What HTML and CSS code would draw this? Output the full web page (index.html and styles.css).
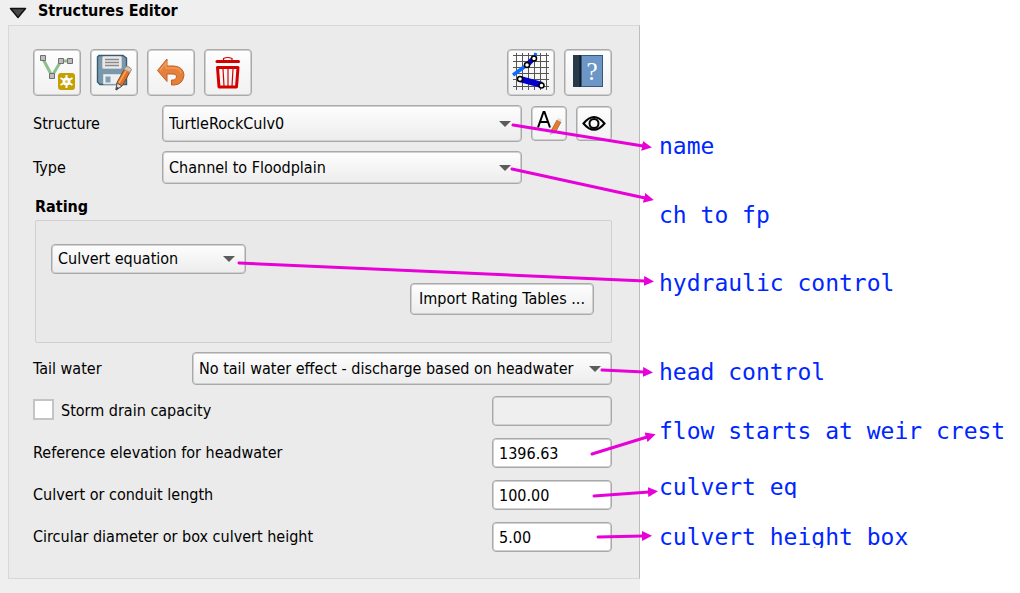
FILE: index.html
```html
<!DOCTYPE html>
<html lang="en">
<head>
<meta charset="utf-8">
<title>Structures Editor</title>
<link rel="stylesheet" href="styles.css">
</head>
<body>
<div class="page">
  <main class="panel">
    <header class="panel-header">
      <svg class="collapse" viewBox="0 0 18 12" aria-hidden="true"><path d="M1.500 1.500H16.500L9 10.500Z" fill="#484848" stroke="#111" stroke-width="1.500" stroke-linejoin="round"/></svg>
      <h1 class="title">Structures Editor</h1>
    </header>
    <form class="group">
      <div class="toolbar">
        <button type="button" class="tool" aria-label="Add structure">
          <svg viewBox="0 0 48 48">
            <path d="M10 10L19 27L28 12H37" fill="none" stroke="#8cc08c" stroke-width="3"/>
            <g fill="#bdbdbd" stroke="#6f6f6f"><path d="M7.500 6.500h5v5h-5zM16.500 24.500h5v5h-5zM25.500 9.500h5v5h-5zM34.500 9.500h5v5h-5z"/></g>
            <rect x="25" y="24" width="17" height="17" rx="3" fill="#c4a000"/>
            <path d="M33.500 26V39M27.500 29l12 7M27.500 36l12-7" stroke="#fff" stroke-width="2"/>
            <circle cx="33.500" cy="32.500" r="4" fill="#fff"/><circle cx="33.500" cy="32.500" r="1.500" fill="#e5c24a"/>
          </svg>
        </button>
        <button type="button" class="tool" aria-label="Save edits">
          <svg viewBox="0 0 48 48">
            <path d="M9 6.500H33L36.500 9V35.500H10L7.500 33V8Z" fill="#7898ac" stroke="#385b70" stroke-width="1.400"/>
            <rect x="12.500" y="7.500" width="19" height="12" rx="1" fill="#e9e9e9" stroke="#ccc"/>
            <path d="M15 10.500H29M15 13.500H29M15 16.500H29" stroke="#8b8b8b" stroke-width="1.500"/>
            <path d="M13.500 25.500H30.500V35H13.500Z" fill="#eee" stroke="#d5dde2"/>
            <rect x="15.500" y="27.500" width="5" height="6" fill="#7da0b8"/>
            <path d="M27 33.500L34.500 20L40 23L32.500 36.500L26 41Z" fill="#e56f22" stroke="#7b4a26"/>
            <path d="M29 34L36.500 21" stroke="#ffae58" stroke-width="1.500"/>
            <path d="M34 20.500L36 17.500Q40 17 41.500 20.500L40 23.500Z" fill="#d9c5b5" stroke="#a08d80"/>
            <path d="M27 34L32 37L26 41Z" fill="#ddd" stroke="#555"/><path d="M26 41l1-3 2 1z" fill="#333"/>
          </svg>
        </button>
        <button type="button" class="tool" aria-label="Undo">
          <svg viewBox="0 0 48 48">
            <path d="M10.500 21.500L20 10V17H27Q36.500 18 37 26Q36 35.500 27 36H24.500V31H27Q30 30 29.500 27Q29 25 26 25H20V32.500Z" fill="#e5803c" stroke="#c45f1c" stroke-linejoin="round"/>
            <path d="M13 21.500L19 14V19H27Q33 19 34 24" fill="none" stroke="#ef9a5c" stroke-width="1.500"/>
          </svg>
        </button>
        <button type="button" class="tool" aria-label="Delete">
          <svg viewBox="0 0 48 48" fill="none" stroke="#d40000">
            <path d="M13 12.500H34.500" stroke-width="3" stroke-linecap="round"/>
            <path d="M19.500 11V9.500Q23.500 7.500 28 9.500V11" stroke-width="1.200"/>
            <path d="M13.500 18.500H34L32.500 38H15Z" stroke-width="3" stroke-linejoin="round"/>
            <path d="M19 20L20 37M24 20V37M29 20L28 37" stroke-width="1.200"/>
          </svg>
        </button>
        <span class="spacer"></span>
        <button type="button" class="tool" aria-label="Schematize structures">
          <svg viewBox="0 0 48 48">
            <path d="M9.500 4V41M15.500 4V41M21.500 4V41M27.500 4V41M33.500 4V41M39.500 4V41M6 6.500H42M6 12.500H42M6 18.500H42M6 24.500H42M6 30.500H42M6 37.500H42" stroke="#555" stroke-width="1"/>
            <path d="M6 26L20 16" stroke="#0a6cff" stroke-width="3.500"/>
            <path d="M20 16L27 9" stroke="#0000c8" stroke-width="5"/><path d="M27 9L29 4" stroke="#0a6cff" stroke-width="3"/>
            <path d="M13 30L35 36" stroke="#0000c8" stroke-width="6"/>
            <g fill="#fff" stroke="#000" stroke-width="1.500"><circle cx="20" cy="16" r="2.500"/><circle cx="27" cy="9.500" r="2.500"/><circle cx="13" cy="30" r="2.500"/><circle cx="34.500" cy="36.500" r="2.500"/></g>
          </svg>
        </button>
        <button type="button" class="tool" aria-label="Help">
          <svg viewBox="0 0 48 48">
            <rect x="9" y="6" width="30" height="32" fill="#263a49"/>
            <path d="M16.500 6V38" stroke="#111d27" stroke-width="2"/>
            <rect x="17.500" y="6.500" width="21" height="31" fill="#6b96c5" stroke="#375877"/>
            <text x="28" y="31" text-anchor="middle" class="help-glyph">?</text>
          </svg>
        </button>
      </div>

      <div class="row row-structure">
        <label class="label label-short" for="structure">Structure</label>
        <span class="combo grow"><select id="structure"><option>TurtleRockCulv0</option></select><svg class="caret" viewBox="0 0 12 6"><path d="M0 0H12L6 6Z"/></svg></span>
        <button type="button" class="tool small" aria-label="Rename structure">
          <svg viewBox="0 0 36 36">
            <path d="M7 21.500L12.500 6H13.500L19 21.500M9 16H17" fill="none" stroke="#000" stroke-width="2"/>
            <path d="M20 25L26 14L30 16L24 27Z" fill="#e57a2c" stroke="#a8653a" stroke-width=".8"/>
            <path d="M26 14L27.500 12L31 14L30 16Z" fill="#ddd"/><path d="M20 24.500L24 27L19 29Z" fill="#bbb"/>
          </svg>
        </button>
        <button type="button" class="tool small" aria-label="Show structure">
          <svg viewBox="0 0 36 36" fill="none" stroke="#000" stroke-width="2"><path d="M7.500 17.500Q18 4.500 28.500 17.500Q18 30 7.500 17.500Z"/><circle cx="18" cy="17.500" r="4.500"/></svg>
        </button>
      </div>

      <div class="row row-type">
        <label class="label label-short" for="type">Type</label>
        <span class="combo combo-type"><select id="type"><option>Channel to Floodplain</option></select><svg class="caret" viewBox="0 0 12 6"><path d="M0 0H12L6 6Z"/></svg></span>
      </div>

      <h2 class="subtitle">Rating</h2>
      <section class="rating">
        <span class="combo combo-rating"><select aria-label="Rating method"><option>Culvert equation</option></select><svg class="caret" viewBox="0 0 12 6"><path d="M0 0H12L6 6Z"/></svg></span>
        <button type="button" class="import">Import Rating Tables ...</button>
      </section>

      <div class="row row-tail">
        <label class="label label-tail" for="tail">Tail water</label>
        <span class="combo grow"><select id="tail"><option>No tail water effect - discharge based on headwater</option></select><svg class="caret" viewBox="0 0 12 6"><path d="M0 0H12L6 6Z"/></svg></span>
      </div>

      <div class="fields">
        <div class="row">
          <input type="checkbox" class="check" id="storm">
          <label class="label grow" for="storm">Storm drain capacity</label>
          <input type="text" class="field" aria-label="Storm drain capacity value" disabled>
        </div>
        <div class="row">
          <label class="label grow" for="elevation">Reference elevation for headwater</label>
          <input type="text" class="field" id="elevation" value="1396.63">
        </div>
        <div class="row">
          <label class="label grow" for="length">Culvert or conduit length</label>
          <input type="text" class="field" id="length" value="100.00">
        </div>
        <div class="row">
          <label class="label grow" for="height">Circular diameter or box culvert height</label>
          <input type="text" class="field" id="height" value="5.00">
        </div>
      </div>
    </form>
  </main>

  <aside class="notes">
    <p class="note">name</p>
    <p class="note">ch to fp</p>
    <p class="note">hydraulic control</p>
    <p class="note">head control</p>
    <p class="note">flow starts at weir crest</p>
    <p class="note cut">culvert eq</p>
    <p class="note cut">culvert height box</p>
  </aside>

  <svg class="arrows" viewBox="0 0 1020 593" aria-hidden="true">
    <defs><marker id="head" markerUnits="userSpaceOnUse" markerWidth="10" markerHeight="10" refX="1" refY="5" orient="auto"><path d="M0 0L10 5L0 10Z" fill="#e800d8"/></marker></defs>
    <g stroke="#e800d8" stroke-width="3" stroke-linecap="round">
      <path d="M513 125L643 146" marker-end="url(#head)"/>
      <path d="M512 169L645 198" marker-end="url(#head)"/>
      <path d="M239 263L645 281" marker-end="url(#head)"/>
      <path d="M602 370L644 372" marker-end="url(#head)"/>
      <path d="M592 454L647 437" marker-end="url(#head)"/>
      <path d="M594 496L649 492" marker-end="url(#head)"/>
      <path d="M598 537L643 536" marker-end="url(#head)"/>
    </g>
  </svg>
</div>
</body>
</html>
```
FILE: styles.css
```css
* { box-sizing: border-box; }

body {
  margin: 0;
  background: #fff;
  color: #000;
  font: 16px/20px "DejaVu Sans Condensed", "Noto Sans", sans-serif;
}

.page {
  position: relative;
  display: grid;
  grid-template-columns: minmax(0, 1fr) 380px;
  min-height: 100vh;
}

.panel { background: #efefef; padding: 0 0 15px 8px; }

.panel-header { display: flex; align-items: center; gap: 11px; height: 25px; padding: 0 1px 4px; }
.collapse { width: 18px; height: 12px; margin-top: 4px; }
.title, .subtitle { margin: 0; font-size: 16px; line-height: 20px; font-weight: bold; }

.group {
  padding: 23px 27px 26px 24px;
  background: #ebebeb;
  border: 1px solid #d8d8d8;
  border-right-color: #bdbdbd;
}

.toolbar { display: flex; gap: 9px; margin-bottom: 9px; }
.spacer, .grow { flex: 1; }

button, select, input { font: inherit; color: inherit; margin: 0; }

.tool, .import, .field, .combo select {
  border: 1px solid #a9a9a9;
  border-radius: 4px;
  box-shadow: inset 0 0 0 1px #d0d0d0;
}

.tool {
  width: 48px;
  height: 47px;
  padding: 0;
  background: linear-gradient(#fefefe, #f1f1f1);
  overflow: hidden;
}
.tool svg { display: block; width: 48px; height: 48px; margin: -1px; }
.tool.small { width: 36px; height: 35px; }
.tool.small svg { width: 36px; height: 36px; }
.help-glyph { font: 25px "Liberation Serif", serif; fill: #fff; }

.row { display: flex; align-items: center; }
.row-structure { gap: 9px; margin-bottom: 9px; }
.row-structure .label-short { width: 120px; }
.row-structure .combo { height: 37px; }
.row-type { margin-bottom: 9px; }
.label-short { width: 129px; }
.combo-type { height: 33px; flex: 1; margin-right: 90px; }

.combo { position: relative; display: block; }
.combo select {
  appearance: none;
  display: block;
  width: 100%;
  height: 100%;
  padding: 0 24px 0 6px;
  background: linear-gradient(#fefefe, #ececec);
}
.caret {
  position: absolute;
  right: 11px;
  top: 50%;
  width: 12px;
  height: 6px;
  margin-top: -3px;
  fill: #5c5c5c;
  pointer-events: none;
}

.subtitle { height: 27px; padding: 4px 2px; }

.rating {
  display: flex;
  flex-direction: column;
  gap: 9px;
  margin: 0 0 9px 2px;
  padding: 23px 17px 27px 15px;
  border: 1px solid #d0d0d0;
  border-radius: 2px;
  background: #e9e9e9;
}
.combo-rating { width: 195px; height: 30px; }
.import {
  align-self: flex-end;
  height: 32px;
  padding: 0 8px;
  background: linear-gradient(#fefefe, #ececec);
}

.row-tail { margin-bottom: 11px; }
.row-tail .combo { height: 33px; }
.label-tail { width: 159px; }

.fields { display: flex; flex-direction: column; gap: 12px; }
.check {
  appearance: none;
  width: 21px;
  height: 21px;
  margin: 0 7px 4px 0;
  border: 2px solid #c4c4c4;
  background: #fff;
}
.field {
  width: 120px;
  height: 30px;
  padding: 2px 6px 1px;
  background: #fff;
}
.field:disabled { background: #efefef; }

.notes {
  display: grid;
  grid-template-rows: 69px 68px 89px 59px 56px 50px;
  align-content: start;
  align-items: start;
  padding: 132px 0 0 19px;
  color: #0026ff;
  font: 23px/28px "DejaVu Sans Mono", monospace;
}
.note { margin: 0; white-space: nowrap; }
.cut { height: 25px; overflow: hidden; }

.arrows {
  position: absolute;
  top: 0;
  right: 0;
  width: 1020px;
  height: 593px;
  fill: none;
  pointer-events: none;
}
```
